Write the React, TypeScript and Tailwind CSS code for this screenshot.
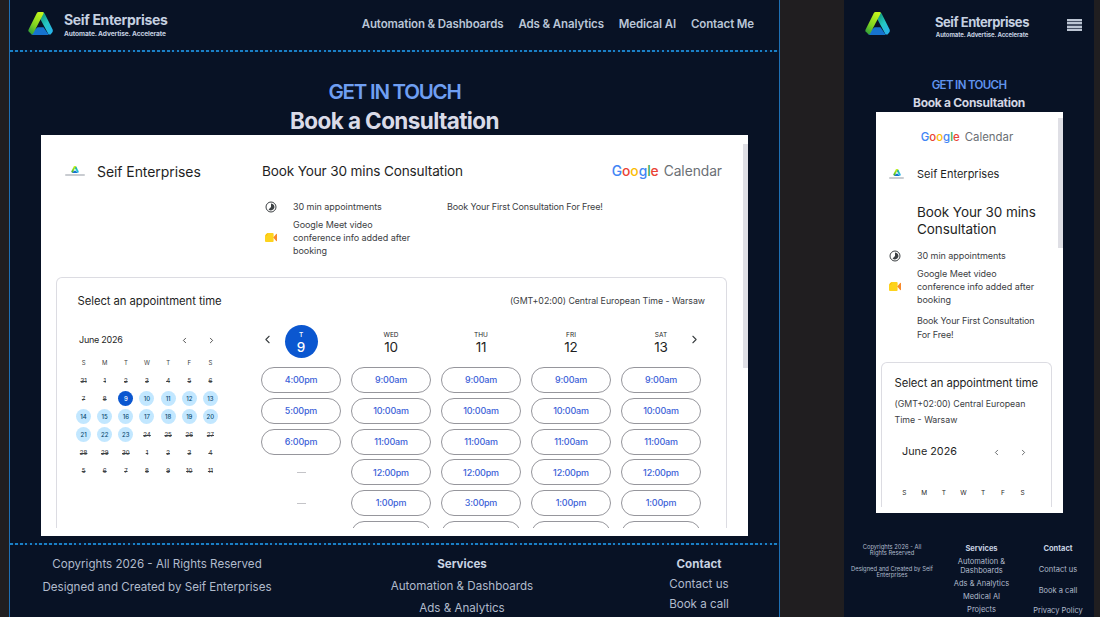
import React from 'react';
import { ChevronLeft, ChevronRight } from 'lucide-react';
import clsx from 'clsx';

const WEEKDAYS = ['S', 'M', 'T', 'W', 'T', 'F', 'S'];

const WEEKS = [
  [31, 1, 2, 3, 4, 5, 6],
  [7, 8, 9, 10, 11, 12, 13],
  [14, 15, 16, 17, 18, 19, 20],
  [21, 22, 23, 24, 25, 26, 27],
  [28, 29, 30, 1, 2, 3, 4],
  [5, 6, 7, 8, 9, 10, 11],
];

const DAYS = [
  { label: 'T', date: 9, today: true, slots: ['4:00pm', '5:00pm', '6:00pm', null, null] },
  { label: 'WED', date: 10, slots: ['9:00am', '10:00am', '11:00am', '12:00pm', '1:00pm', ''] },
  { label: 'THU', date: 11, slots: ['9:00am', '10:00am', '11:00am', '12:00pm', '3:00pm', ''] },
  { label: 'FRI', date: 12, slots: ['9:00am', '10:00am', '11:00am', '12:00pm', '1:00pm', ''] },
  { label: 'SAT', date: 13, slots: ['9:00am', '10:00am', '11:00am', '12:00pm', '1:00pm', ''] },
];

const Logo: React.FC<{ className?: string }> = ({ className }) => (
  <svg viewBox="0 0 25 23" className={className}>
    <defs>
      <linearGradient id="leaf" x1="0.7" y1="0" x2="0.2" y2="1">
        <stop offset="0" stopColor="#c4f51c" />
        <stop offset="0.6" stopColor="#7ed321" />
        <stop offset="1" stopColor="#2f9e3a" />
      </linearGradient>
      <linearGradient id="sea" x1="0" y1="0" x2="0.6" y2="1">
        <stop offset="0" stopColor="#0c8a62" />
        <stop offset="0.6" stopColor="#25c7c4" />
        <stop offset="1" stopColor="#27b4e8" />
      </linearGradient>
    </defs>
    <path d="M6.5 18 L9.6 15.3 H15.5 L20.5 22.5 Q20 23 19 23 H5 Q4 23 3.4 22.3 Z" fill="#1673cf" />
    <path d="M14 0 Q15.8 0 16.6 1.6 L24.6 17.6 Q25.2 19 24.2 20.4 L22.6 22.6 H20.6 L12 6.4 Z" fill="url(#sea)" />
    <path d="M10.5 0 H15 Q16 0.4 15.6 1.6 L5.2 21.6 Q4.4 23 3.4 22.3 L0.6 19.6 Q0 18.6 0.6 17.4 L8.6 1.4 Q9.4 0 10.5 0 Z" fill="url(#leaf)" />
  </svg>
);

// small account picture: the mark above a thin wordmark
const Avatar = () => (
  <div className="flex w-full flex-col items-center">
    <Logo className="h-[7px] w-2" />
    <div className="mt-px h-[2px] w-full rounded-full bg-[#c9ccd1]" />
  </div>
);

const DurationIcon = () => (
  <svg viewBox="0 0 12 12" className="size-[12px] shrink-0">
    <circle cx="6" cy="6" r="5" fill="none" stroke="#3c4043" strokeWidth="1" />
    <path d="M6 2.6 A3.4 3.4 0 1 1 3.6 8.4 L6 6 Z" fill="#3c4043" />
  </svg>
);

const MeetIcon = () => (
  <svg viewBox="0 0 12 9" className="h-[9px] w-3 shrink-0">
    <path d="M2.4 0 H7.6 Q8.6 0 8.6 1 V8 Q8.6 9 7.6 9 H1 Q0 9 0 8 V2.4 Z" fill="#fdd31d" />
    <path d="M2.4 0 V2.4 H0 Z" fill="#fbbc04" />
    <path d="M8.2 4.5 L11.2 1 Q12 0.6 12 1.4 V7.6 Q12 8.4 11.2 8 Z" fill="#f9892b" />
  </svg>
);

const GoogleCalendar: React.FC<{ className?: string }> = ({ className }) => (
  <div className={clsx('flex items-center whitespace-nowrap text-[#6b6f75]', className)}>
    <span className="font-medium">
      <span className="text-[#4285f4]">G</span>
      <span className="text-[#ea4335]">o</span>
      <span className="text-[#fbbc05]">o</span>
      <span className="text-[#4285f4]">g</span>
      <span className="text-[#34a853]">l</span>
      <span className="text-[#ea4335]">e</span>
    </span>
    <span className="ml-[5px]">Calendar</span>
  </div>
);

const MiniCalendar = () => (
  <div className="w-[148px] shrink-0 text-[#3c4043]">
    <div className="flex h-5 items-center pl-[6px] text-[9px] text-[#1f1f1f]">
      <span className="tracking-[-0.25px]">June 2026</span>
      <ChevronLeft className="ml-auto size-[9px]" />
      <ChevronRight className="ml-[18px] mr-[5px] size-[9px]" />
    </div>
    <div className="mt-[4px] grid grid-cols-7 text-center text-[6px]">
      {WEEKDAYS.map((d, i) => (
        <span key={i} className="h-[17px] leading-[18px]">{d}</span>
      ))}
      {WEEKS.flat().map((day, i) => {
        const open = i > 9 && i < 24;
        const selected = i === 9;
        return (
          <span key={i} className="flex h-[18px] items-center justify-center">
            <span
              className={clsx(
                'flex size-[15px] items-center justify-center rounded-full font-medium',
                selected && 'bg-[#0b57d0] text-white',
                open && 'bg-[#c2e7ff] text-[#0b4a6f]',
                !open && !selected && 'line-through'
              )}
            >
              {day}
            </span>
          </span>
        );
      })}
    </div>
  </div>
);

const SlotColumns = () => (
  <div className="relative flex gap-[10px]">
    <ChevronLeft className="absolute left-0 top-[8px] size-[13px] text-[#3c4043]" strokeWidth={2} />
    <ChevronRight className="absolute right-0 top-[8px] size-[13px] text-[#3c4043]" strokeWidth={2} />
    {DAYS.map((day) => (
      <div key={day.date} className="flex w-20 flex-col items-center">
        <div
          className={clsx(
            'flex size-[33px] flex-col items-center justify-center rounded-full pt-[3px]',
            day.today ? 'bg-[#0b57d0] font-medium text-white' : 'text-[#1f1f1f]'
          )}
        >
          <span className="text-[6.5px] leading-[8px]">{day.label}</span>
          <span className="text-[13.5px] leading-[17px] tracking-[-0.2px]">{day.date}</span>
        </div>
        <div className="mt-[9px] flex w-full flex-col items-center gap-[4.8px]">
          {day.slots.map((slot, i) =>
            slot === null ? (
              <span key={i} className="flex h-[26px] items-center">
                <span className="h-px w-[9px] bg-[#c4c4c8]" />
              </span>
            ) : (
              <span
                key={i}
                className="flex h-[26px] w-full items-center justify-center rounded-full border border-[#96969c] text-[9px] font-medium tracking-[-0.2px] text-[#3c62d8]"
              >
                {slot}
              </span>
            )
          )}
        </div>
      </div>
    ))}
  </div>
);

const Divider = () => (
  <div className="h-[2px] shrink-0 bg-[repeating-linear-gradient(90deg,#1a80c6_0_2.7px,#0a1a33_2.7px_4.9px)]" />
);

const DesktopPreview = () => (
  <div className="ml-[9px] flex w-[771px] shrink-0 flex-col border-x border-[#1d6fb4] bg-[#081225]">
    <header className="flex h-[50px] shrink-0 items-center pl-[18px] pr-[25px] text-[#c5d0e0]">
      <Logo className="mt-[-3px] h-[23px] w-[25px]" />
      <div className="ml-[11px] mt-px whitespace-nowrap font-bold">
        <div className="text-[14px] leading-[16px] tracking-[-0.35px]">Seif Enterprises</div>
        <div className="mt-[1px] text-[6.6px] leading-[10px] tracking-[-0.1px]">Automate. Advertise. Accelerate</div>
      </div>
      <nav className="ml-auto flex gap-[15px] whitespace-nowrap text-[11.5px] font-semibold tracking-[-0.13px] text-[#b9c5d6]">
        <span>Automation &amp; Dashboards</span>
        <span>Ads &amp; Analytics</span>
        <span>Medical AI</span>
        <span>Contact Me</span>
      </nav>
    </header>
    <Divider />

    <section className="flex h-[491px] shrink-0 flex-col pl-[31px]">
      <div className="w-[707px] pt-[25px] text-center">
        <div className="text-[20.5px] font-semibold leading-[29px] tracking-[-1.25px] text-[#6f9ff2]">GET IN TOUCH</div>
        <div className="text-[22.5px] font-bold leading-[29px] tracking-[-0.6px] text-[#dadbe8]">Book a Consultation</div>
      </div>
      <div className="flex h-[401px] w-[707px] overflow-hidden bg-white">
        <div className="w-[702px] pt-6 text-[#1f1f1f]">
          <div className="flex h-6 items-center whitespace-nowrap pl-6 pr-[21px]">
            <div className="w-5"><Avatar /></div>
            <span className="ml-[12px] w-[165px] text-[14px] tracking-[-0.07px]">Seif Enterprises</span>
            <span className="text-[13.6px] tracking-[-0.16px]">Book Your 30 mins Consultation</span>
            <GoogleCalendar className="ml-auto text-[13.8px] tracking-[-0.05px]" />
          </div>
          <div className="mt-[17px] flex pl-[224px] text-[9px] leading-[13px] tracking-[-0.05px] text-[#3c4043]">
            <div className="w-[182px]">
              <div className="flex items-center gap-4">
                <DurationIcon />
                <span>30 min appointments</span>
              </div>
              <div className="mt-[5px] flex items-center gap-4">
                <MeetIcon />
                <span>Google Meet video<br />conference info added after<br />booking</span>
              </div>
            </div>
            <span className="whitespace-nowrap tracking-[-0.14px]">Book Your First Consultation For Free!</span>
          </div>
          <div className="ml-[15px] mt-5 h-[251px] w-[671px] overflow-hidden rounded-t-md border border-b-0 border-[#dcdce2] pt-[13px]">
            <div className="flex h-5 items-center justify-between whitespace-nowrap pl-[20.5px] pr-[21px]">
              <span className="text-[11.3px] tracking-[-0.06px]">Select an appointment time</span>
              <span className="text-[8.8px] tracking-[-0.03px] text-[#3c4043]">(GMT+02:00) Central European Time - Warsaw</span>
            </div>
            <div className="mt-[14px] flex pl-4">
              <div className="mt-[5px]"><MiniCalendar /></div>
              <div className="ml-10"><SlotColumns /></div>
            </div>
          </div>
        </div>
        <div className="mt-[9px] h-[224px] w-[5px] bg-[#dfdfe5]" />
      </div>
    </section>
    <Divider />

    <footer className="flex whitespace-nowrap pl-[20px] pt-[8px] text-center text-[11.6px] leading-[22px] text-[#b0bbcc]">
      <div className="w-[254px] leading-[23px]">
        <div>Copyrights 2026 - All Rights Reserved</div>
        <div>Designed and Created by Seif Enterprises</div>
      </div>
      <div className="ml-[81px] w-[194px]">
        <div className="font-bold text-[#c8d2e2]">Services</div>
        <div>Automation &amp; Dashboards</div>
        <div>Ads &amp; Analytics</div>
      </div>
      <div className="ml-[80px] w-[120px] leading-[20px]">
        <div className="pt-px font-bold text-[#c8d2e2]">Contact</div>
        <div>Contact us</div>
        <div>Book a call</div>
      </div>
    </footer>
  </div>
);

const MobilePreview = () => (
  <div className="ml-16 flex w-[250px] shrink-0 flex-col bg-[#081225]">
    <header className="flex h-[50px] shrink-0 items-center pl-[21px] pr-3 text-[#c5d0e0]">
      <Logo className="mt-[-3px] h-[23px] w-[25px]" />
      <div className="ml-auto mt-[3px] w-[96px] whitespace-nowrap text-center font-bold">
        <div className="text-[13px] leading-[16px] tracking-[-0.45px]">Seif Enterprises</div>
        <div className="text-[6px] leading-[10px] tracking-[-0.1px]">Automate. Advertise. Accelerate</div>
      </div>
      <div className="ml-[37px] flex h-3 w-[15px] flex-col justify-between bg-[#465064]">
        <div className="h-[2px] bg-[#bcc5d3]" />
        <div className="h-[2px] bg-[#bcc5d3]" />
        <div className="h-[2px] bg-[#bcc5d3]" />
        <div className="h-[2px] bg-[#bcc5d3]" />
      </div>
    </header>

    <div className="whitespace-nowrap pt-[26px] text-center leading-[18px]">
      <div className="text-[11.5px] font-semibold tracking-[-0.65px] text-[#6094ee]">GET IN TOUCH</div>
      <div className="text-[12px] font-bold tracking-[-0.3px] text-[#d3d6e2]">Book a Consultation</div>
    </div>

    <div className="ml-8 flex h-[401px] w-[187px] shrink-0 overflow-hidden bg-white text-[#1f1f1f]">
      <div className="w-[182px] whitespace-nowrap pt-[16px]">
        <GoogleCalendar className="h-5 justify-center text-[11.4px]" />
        <div className="mt-4 flex h-5 items-center pl-[13px]">
          <div className="w-[15px]"><Avatar /></div>
          <span className="ml-[13px] text-[11px]">Seif Enterprises</span>
        </div>
        <div className="ml-[41px] mt-[20px] text-[13.5px] leading-[17px] tracking-[-0.08px]">Book Your 30 mins<br />Consultation</div>
        <div className="mt-[11px] pl-[13px] text-[9px] leading-[13px] tracking-[-0.05px] text-[#3c4043]">
          <div className="flex items-center gap-4">
            <DurationIcon />
            <span>30 min appointments</span>
          </div>
          <div className="mt-[5px] flex items-center gap-4">
            <MeetIcon />
            <span>Google Meet video<br />conference info added after<br />booking</span>
          </div>
          <div className="ml-[28px] mt-2 leading-[14px] tracking-[-0.12px]">Book Your First Consultation<br />For Free!</div>
        </div>
        <div className="ml-[5px] mt-[20px] h-[145px] w-[171px] overflow-hidden rounded-t-md border border-b-0 border-[#dcdce2] pl-[12.5px] pt-[10px]">
          <div className="text-[11.3px] leading-5 tracking-[-0.08px]">Select an appointment time</div>
          <div className="mt-[3px] text-[8.8px] leading-[15.5px] text-[#3c4043]">(GMT+02:00) Central European<br />Time - Warsaw</div>
          <div className="mt-[15px] flex h-5 items-center pl-[7.5px]">
            <span className="text-[10.8px]">June 2026</span>
            <ChevronLeft className="ml-auto size-[9px] text-[#3c4043]" />
            <ChevronRight className="ml-[18px] mr-[23px] size-[9px] text-[#3c4043]" />
          </div>
          <div className="mt-[22px] grid w-[138px] grid-cols-7 text-center text-[6.5px] leading-[19px]">
            {WEEKDAYS.map((d, i) => <span key={i}>{d}</span>)}
          </div>
        </div>
      </div>
      <div className="mt-[6px] h-[130px] w-[5px] bg-[#dfdfe5]" />
    </div>

    <footer className="flex whitespace-nowrap pt-[30px] text-center text-[7.5px] leading-[9px] text-[#b0bbcc]">
      <div className="ml-[4px] w-[88px] pt-px text-[5.8px] leading-[6px]">
        <div>Copyrights 2026 - All<br />Rights Reserved</div>
        <div className="mt-[10px]">Designed and Created by Seif<br />Enterprises</div>
      </div>
      <div className="ml-[8px] w-[75px]">
        <div className="font-bold leading-[11px] text-[#c8d2e2]">Services</div>
        <div className="mt-[3px]">Automation &amp;<br />Dashboards</div>
        <div className="mt-[4px]">Ads &amp; Analytics</div>
        <div className="mt-[4px]">Medical AI</div>
        <div className="mt-[4px]">Projects</div>
      </div>
      <div className="ml-[8px] w-[62px]">
        <div className="font-bold leading-[11px] text-[#c8d2e2]">Contact</div>
        <div className="mt-[11px]">Contact us</div>
        <div className="mt-[12px]">Book a call</div>
        <div className="mt-[11px]">Privacy Policy</div>
      </div>
    </footer>
  </div>
);

export default function App() {
  return (
    <div className="flex h-[617px] w-[1100px] overflow-hidden bg-[#201e20] font-['Inter',sans-serif]">
      <DesktopPreview />
      <MobilePreview />
    </div>
  );
}
